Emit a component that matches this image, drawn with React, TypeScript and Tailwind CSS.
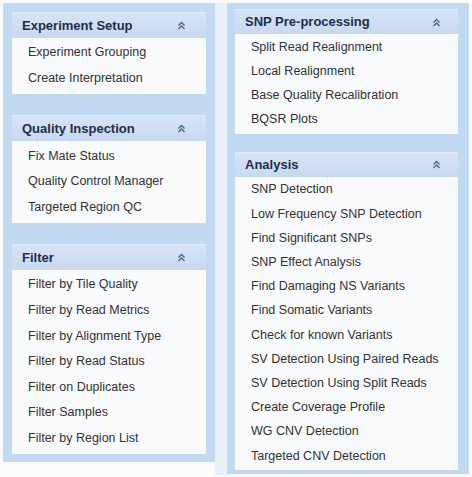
import React from 'react';

const leftSections = [
  { title: 'Experiment Setup', items: ['Experiment Grouping', 'Create Interpretation'] },
  { title: 'Quality Inspection', items: ['Fix Mate Status', 'Quality Control Manager', 'Targeted Region QC'] },
  {
    title: 'Filter',
    items: [
      'Filter by Tile Quality',
      'Filter by Read Metrics',
      'Filter by Alignment Type',
      'Filter by Read Status',
      'Filter on Duplicates',
      'Filter Samples',
      'Filter by Region List',
    ],
  },
];

const rightSections = [
  {
    title: 'SNP Pre-processing',
    items: ['Split Read Realignment', 'Local Realignment', 'Base Quality Recalibration', 'BQSR Plots'],
  },
  {
    title: 'Analysis',
    items: [
      'SNP Detection',
      'Low Frequency SNP Detection',
      'Find Significant SNPs',
      'SNP Effect Analysis',
      'Find Damaging NS Variants',
      'Find Somatic Variants',
      'Check for known Variants',
      'SV Detection Using Paired Reads',
      'SV Detection Using Split Reads',
      'Create Coverage Profile',
      'WG CNV Detection',
      'Targeted CNV Detection',
    ],
  },
];

const Chevrons = () => (
  <svg width="9" height="9" viewBox="0 0 9 9" fill="none" stroke="#4b6582" strokeWidth="1.4">
    <path d="M1.5 4.5 L4.5 1.5 L7.5 4.5" />
    <path d="M1.5 8 L4.5 5 L7.5 8" />
  </svg>
);

type Section = { title: string; items: string[] };

const Panel = ({
  section,
  rowH,
  headH,
  headPr,
  cardPad,
}: {
  section: Section;
  rowH: string;
  headH: string;
  headPr: string;
  cardPad: string;
}) => (
  <div>
    <div
      className={`flex items-center justify-between border-t border-[#e2ecf8] bg-gradient-to-b from-[#d6e4f6] to-[#c7d9f0] pl-[10px] ${headH} ${headPr}`}
    >
      <span className="text-[13px] font-bold text-[#1c2f4a]">{section.title}</span>
      <Chevrons />
    </div>
    <div className={`bg-[#f8fafc] ${cardPad}`}>
      {section.items.map((item) => (
        <div key={item} className={`flex items-center pl-[16px] text-[12.5px] text-[#333] ${rowH}`}>
          {item}
        </div>
      ))}
    </div>
  </div>
);

export default function App() {
  return (
    <div
      className="flex h-[477px] w-[472px] items-start bg-[#f9fbfd] pl-[3px] pt-[3px]"
      style={{ fontFamily: '"Liberation Sans", Arial, sans-serif' }}
    >
      {/* Left column */}
      <div className="flex w-[212px] flex-col gap-[21px] bg-[#c2d9f2] px-[9px] pb-[8px] pt-[9px]">
        {leftSections.map((s) => (
          <Panel
            key={s.title}
            section={s}
            rowH="h-[25.6px]"
            headH="h-[26px]"
            headPr="pr-[20px]"
            cardPad="pt-[2px] pb-[3px]"
          />
        ))}
      </div>

      {/* Spacer strip */}
      <div className="h-[472px] w-[12px] bg-[#e8f1fa]" />

      {/* Right column */}
      <div className="flex w-[242px] flex-col gap-[18px] bg-[#c2d9f2] pb-[4px] pl-[8px] pr-[11px] pt-[6px]">
        {rightSections.map((s) => (
          <Panel
            key={s.title}
            section={s}
            rowH="h-[24.2px]"
            headH="h-[25px]"
            headPr="pr-[17px]"
            cardPad="pt-[1px] pb-[2px]"
          />
        ))}
      </div>
    </div>
  );
}
